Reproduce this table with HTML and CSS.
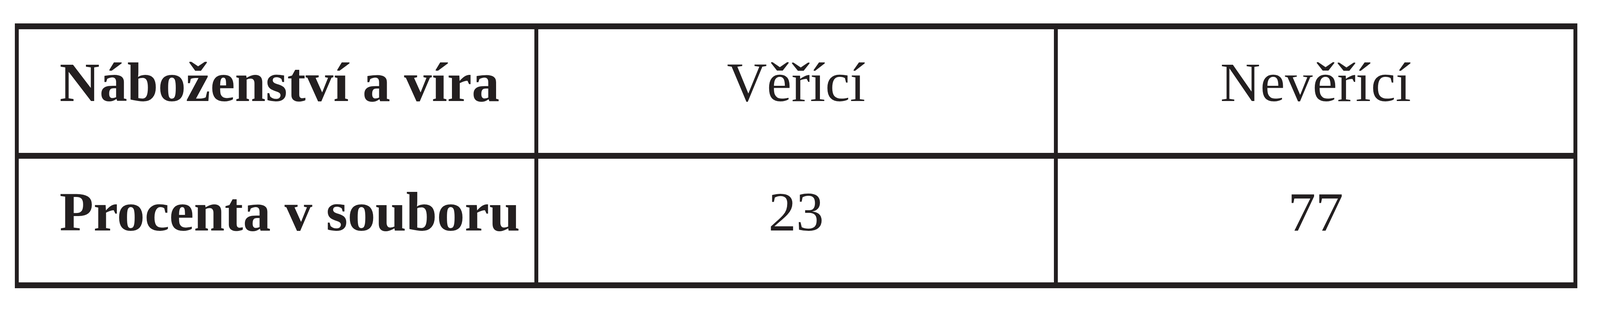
FILE: index.html
```html
<!DOCTYPE html>
<html lang="cs">
<head>
<meta charset="utf-8">
<title>Náboženství a víra</title>
<link rel="stylesheet" href="styles.css">
</head>
<body>
<div class="table">
  <div class="cell label">Náboženství a víra</div>
  <div class="cell value">Věřící</div>
  <div class="cell value">Nevěřící</div>
  <div class="cell label">Procenta v souboru</div>
  <div class="cell value">23</div>
  <div class="cell value">77</div>
</div>
</body>
</html>
```

FILE: styles.css
```css
html, body {
  margin: 0;
  padding: 0;
  background: #ffffff;
  overflow: hidden;
}

body {
  font-family: "Liberation Serif", "Times New Roman", serif;
  color: #231f20;
}

/* Geometry is expressed relative to the 6415 x 800 frame:
   1px horizontally = 0.015588vw, 1px vertically = 0.125vh */
.table {
  margin: 7.5vh 0 0 0.9353vw;
  width: 97.646vw;
  box-sizing: border-box;
  padding: 1.875vh 0.2338vw;
  background: #231f20;
  display: grid;
  grid-template-columns: repeat(3, 1fr);
  grid-auto-rows: 39.625vh;
  column-gap: 0.2338vw;
  row-gap: 1.875vh;
}

.cell {
  background: #ffffff;
  font-size: 3.4607vw;
  line-height: 1.107;
  padding-top: calc(17.3vh - 1.938vw);
  box-sizing: border-box;
  white-space: nowrap;
  overflow: hidden;
}

.label {
  font-weight: bold;
  padding-left: 2.5565vw;
  text-align: left;
}

.value {
  font-weight: normal;
  text-align: center;
}
```
